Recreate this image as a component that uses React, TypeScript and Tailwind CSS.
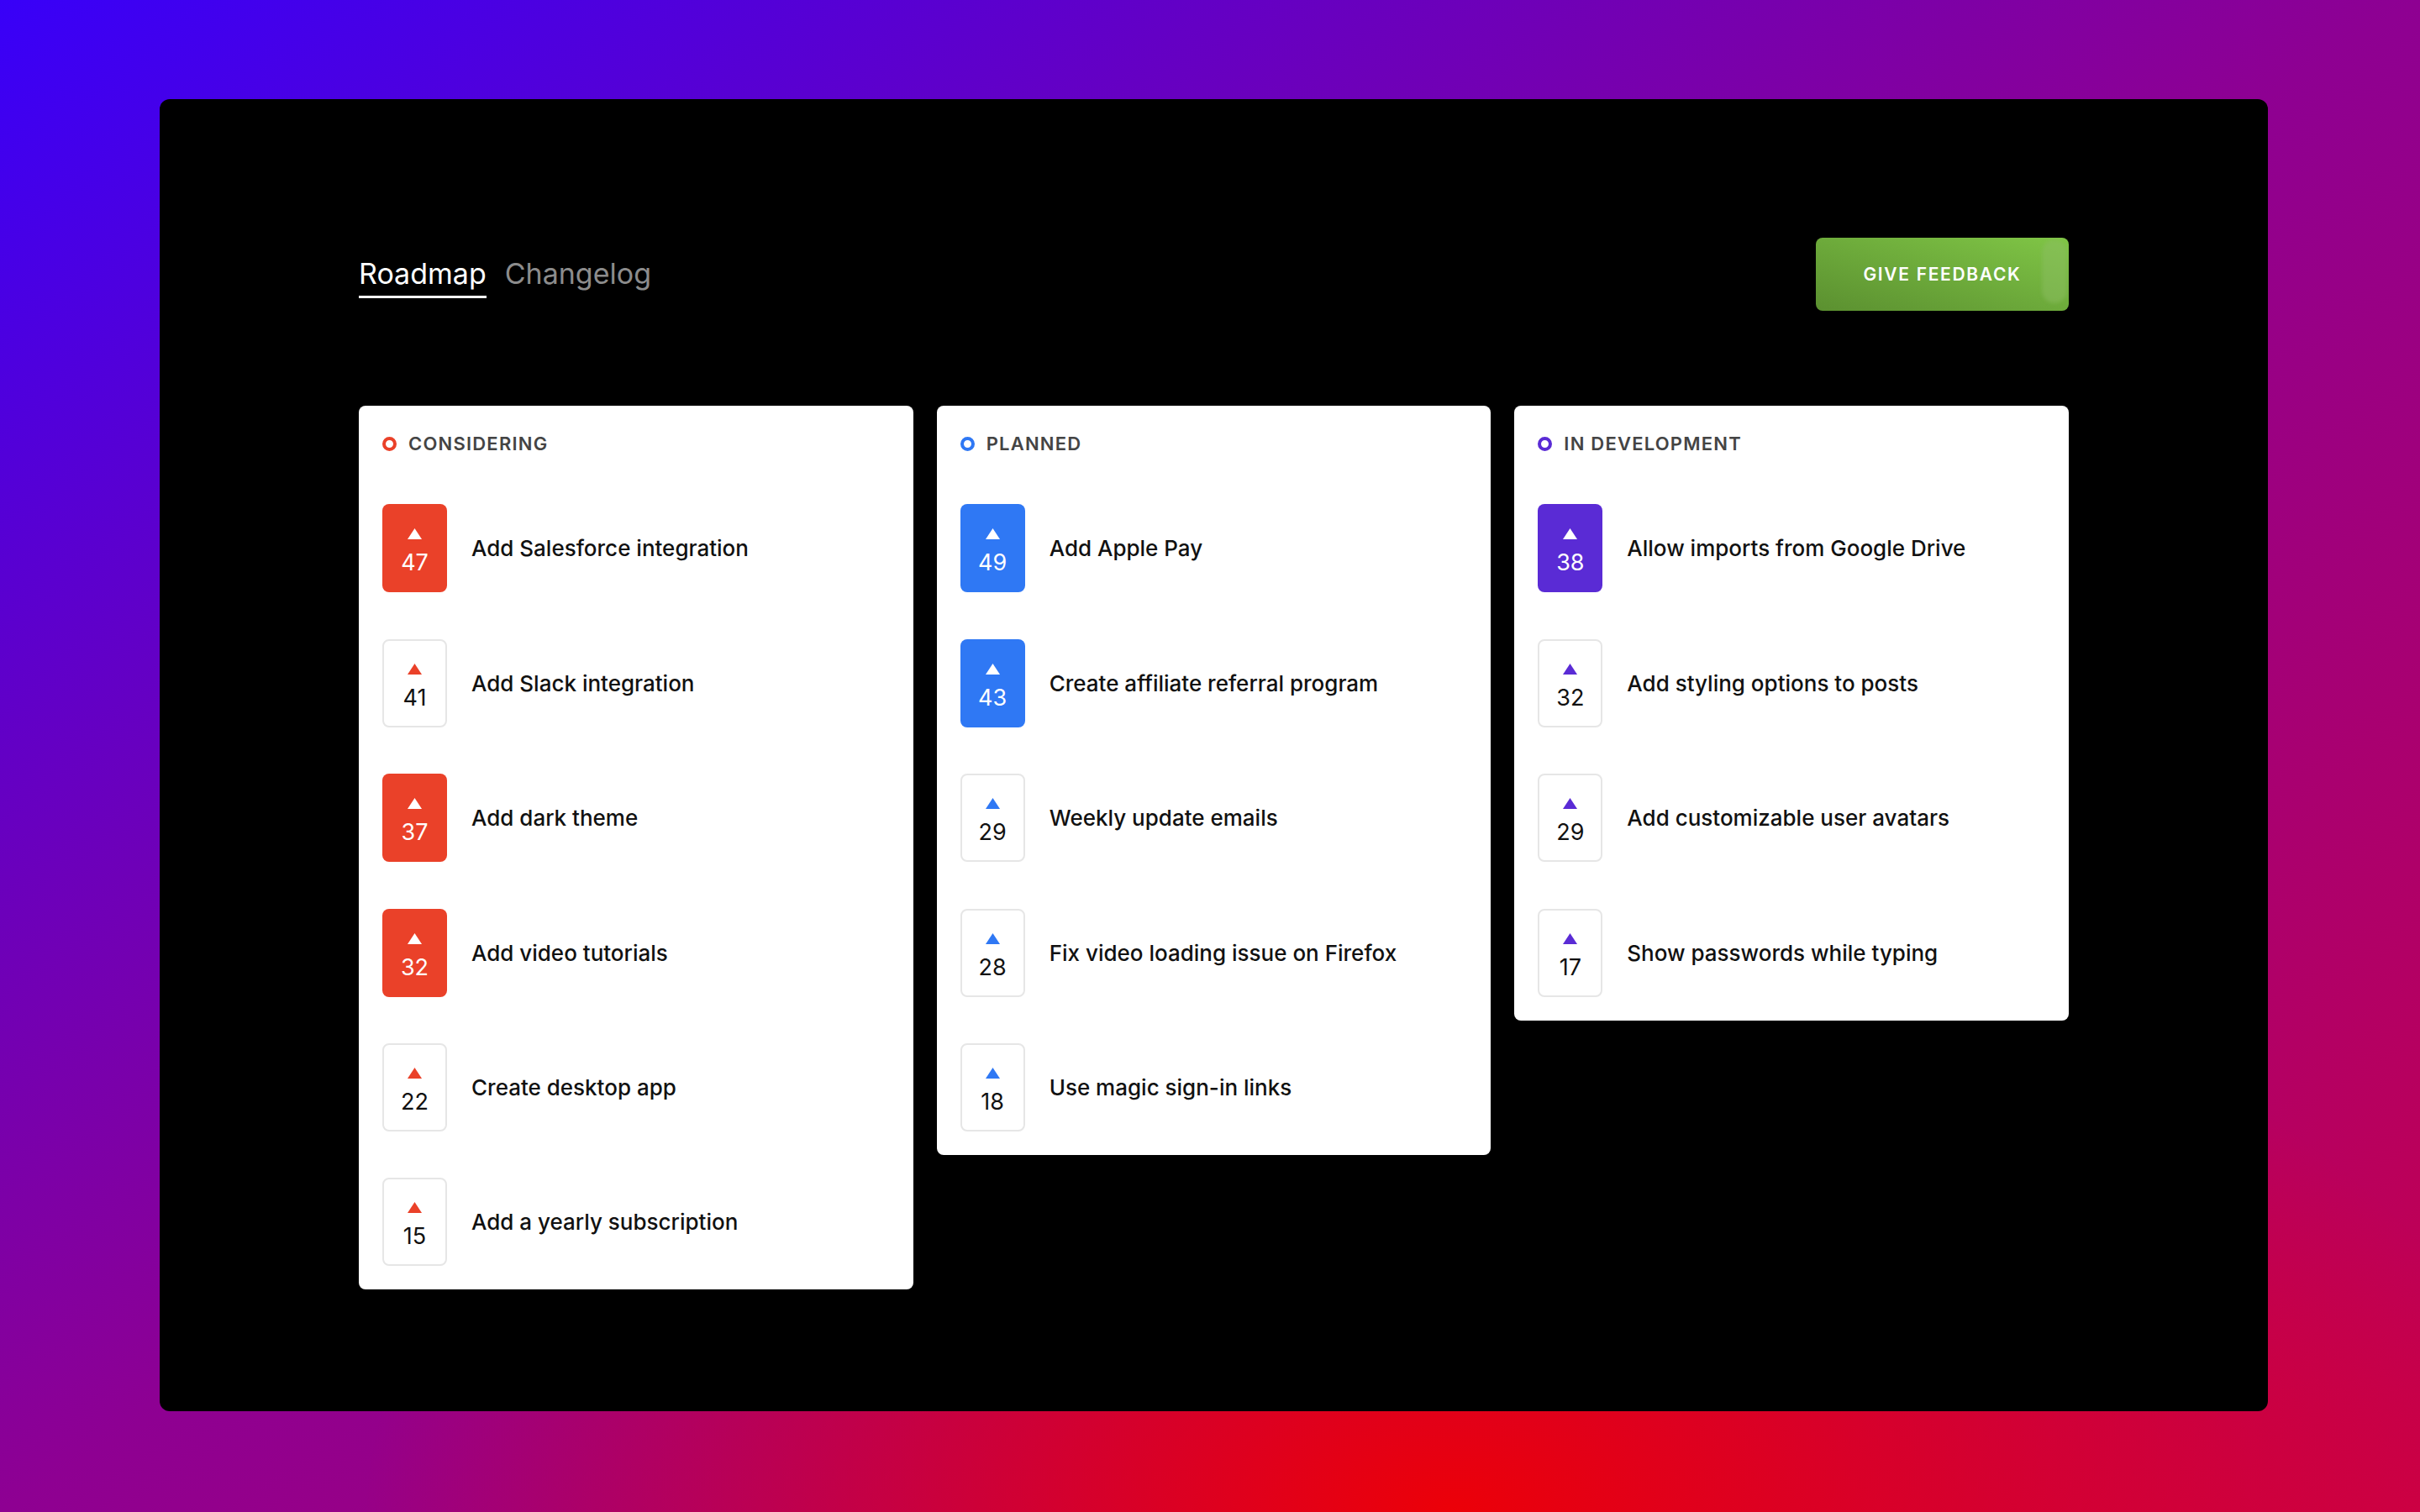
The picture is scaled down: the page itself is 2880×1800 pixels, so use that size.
import React from "react";

type Item = { votes: number; title: string; filled: boolean };

type Column = {
  name: string;
  ring: string;
  solid: string;
  arrow: string;
  items: Item[];
};

const columns: Column[] = [
  {
    name: "Considering",
    ring: "border-[#ea4129]",
    solid: "bg-[#ea4129]",
    arrow: "#ea4129",
    items: [
      { votes: 47, title: "Add Salesforce integration", filled: true },
      { votes: 41, title: "Add Slack integration", filled: false },
      { votes: 37, title: "Add dark theme", filled: true },
      { votes: 32, title: "Add video tutorials", filled: true },
      { votes: 22, title: "Create desktop app", filled: false },
      { votes: 15, title: "Add a yearly subscription", filled: false },
    ],
  },
  {
    name: "Planned",
    ring: "border-[#2f78f4]",
    solid: "bg-[#2f78f4]",
    arrow: "#2f78f4",
    items: [
      { votes: 49, title: "Add Apple Pay", filled: true },
      { votes: 43, title: "Create affiliate referral program", filled: true },
      { votes: 29, title: "Weekly update emails", filled: false },
      { votes: 28, title: "Fix video loading issue on Firefox", filled: false },
      { votes: 18, title: "Use magic sign-in links", filled: false },
    ],
  },
  {
    name: "In Development",
    ring: "border-[#5a2bd5]",
    solid: "bg-[#5a2bd5]",
    arrow: "#5a2bd5",
    items: [
      { votes: 38, title: "Allow imports from Google Drive", filled: true },
      { votes: 32, title: "Add styling options to posts", filled: false },
      { votes: 29, title: "Add customizable user avatars", filled: false },
      { votes: 17, title: "Show passwords while typing", filled: false },
    ],
  },
];

// small up arrow used in the vote box
const Arrow = ({ color }: { color: string }) => (
  <svg width="17" height="13" viewBox="0 0 17 13" className="block">
    <path d="M8.5 0 L17 13 L0 13 Z" fill={color} />
  </svg>
);

const VoteBox = ({ item, col }: { item: Item; col: Column }) => (
  <div
    className={
      item.filled
        ? `w-[77px] h-[105px] shrink-0 rounded-lg flex flex-col items-center justify-center gap-[14px] pt-[7px] ${col.solid}`
        : "w-[77px] h-[105px] shrink-0 rounded-lg flex flex-col items-center justify-center gap-[14px] pt-[7px] bg-white border-2 border-[#e6e6e6]"
    }
  >
    <Arrow color={item.filled ? "#ffffff" : col.arrow} />
    <span
      className={
        item.filled
          ? "text-[27px] leading-none text-white"
          : "text-[27px] leading-none text-[#111111]"
      }
    >
      {item.votes}
    </span>
  </div>
);

const Card = ({ col }: { col: Column }) => (
  <div className="bg-white rounded-lg p-[28px] flex flex-col gap-[55.4px]">
    <div className="h-[34px] flex items-center gap-[14px]">
      <span className={`w-[17px] h-[17px] rounded-full border-[4px] ${col.ring}`} />
      <span className="text-[22px] font-semibold uppercase tracking-[0.055em] text-[#444444]">
        {col.name}
      </span>
    </div>
    {col.items.map((item) => (
      <div key={item.title} className="flex items-center gap-[29px]">
        <VoteBox item={item} col={col} />
        <span className="text-[26px] font-medium text-[#111111]">{item.title}</span>
      </div>
    ))}
  </div>
);

export default function App() {
  return (
    <div
      className="w-[2880px] h-[1800px] overflow-hidden pt-[118px] pl-[190px] bg-[radial-gradient(ellipse_45%_40%_at_60%_100%,#ec0008_0%,rgba(236,0,8,0)_100%),linear-gradient(to_bottom_right,#3800f8_0%,#8e0092_50%,#c8004a_100%)]"
      style={{ fontFamily: "Inter, 'Noto Sans', sans-serif" }}
    >
      <div className="w-[2509px] h-[1562px] bg-black rounded-xl pt-[165px] px-[237px]">
        <div className="flex justify-between items-start">
          <div className="flex items-start gap-[22px] mt-[22px]">
            <span className="text-[34px] leading-[42px] text-white pb-[5px] border-b-[3px] border-white">
              Roadmap
            </span>
            <span className="text-[34px] leading-[42px] text-[#8c8c8c]">Changelog</span>
          </div>
          <button className="relative overflow-hidden w-[301px] h-[87px] rounded-lg bg-linear-to-tr from-[#5b9030] to-[#80c646] text-white text-[21px] font-semibold tracking-[0.08em]">
            GIVE FEEDBACK
            <span className="absolute right-[2px] top-[2px] w-[30px] h-[76px] rounded-full bg-[#8cbd62] opacity-50 blur-[2px]" />
          </button>
        </div>

        <div className="mt-[113px] grid grid-cols-3 gap-[28px] items-start">
          {columns.map((col) => (
            <Card key={col.name} col={col} />
          ))}
        </div>
      </div>
    </div>
  );
}
